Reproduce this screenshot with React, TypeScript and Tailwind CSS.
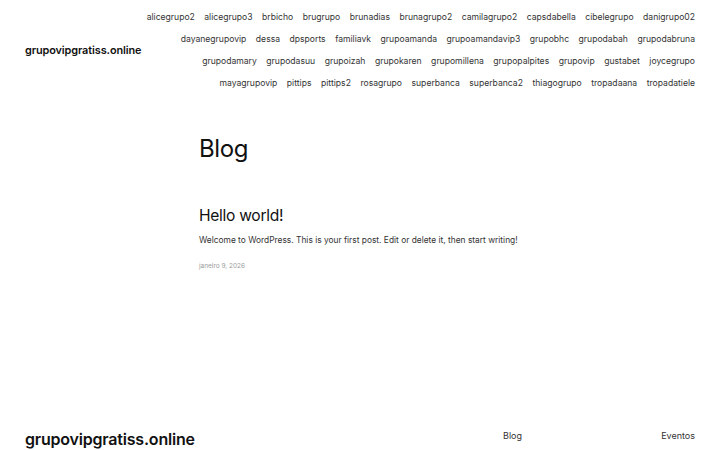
import React from 'react';

const rows: string[][] = [
    ['alicegrupo2', 'alicegrupo3', 'brbicho', 'brugrupo', 'brunadias', 'brunagrupo2', 'camilagrupo2', 'capsdabella', 'cibelegrupo', 'danigrupo02'],
    ['dayanegrupovip', 'dessa', 'dpsports', 'familiavk', 'grupoamanda', 'grupoamandavip3', 'grupobhc', 'grupodabah', 'grupodabruna'],
    ['grupodamary', 'grupodasuu', 'grupoizah', 'grupokaren', 'grupomillena', 'grupopalpites', 'grupovip', 'gustabet', 'joycegrupo'],
    ['mayagrupovip', 'pittips', 'pittips2', 'rosagrupo', 'superbanca', 'superbanca2', 'thiagogrupo', 'tropadaana', 'tropadatiele'],
];

export default function App() {
    return (
        <div className="min-h-[450px] bg-white text-[#111] flex flex-col" style={{ fontFamily: 'Inter, "Noto Sans", sans-serif' }}>
            <header className="flex items-center justify-between pl-[25px] pr-[25px] pt-[3px]">
                <a href="#" className="text-[10.9px] font-semibold tracking-[-0.1px] mt-[6px]">
                    grupovipgratiss.online
                </a>
                <nav className="flex flex-col items-end">
                    {rows.map((row, i) => (
                        <ul key={i} className="flex gap-x-[9.5px] h-[22px] items-center">
                            {row.map((item) => (
                                <li key={item}>
                                    <a href="#" className="text-[8.6px] text-[#333]">
                                        {item}
                                    </a>
                                </li>
                            ))}
                        </ul>
                    ))}
                </nav>
            </header>

            <main className="w-[322px] mx-auto pt-[46px]">
                <h1 className="text-[24px] leading-none tracking-[-0.4px]">Blog</h1>
                <article className="mt-[47px]">
                    <h2 className="text-[15.6px] leading-none tracking-[-0.3px]">
                        <a href="#">Hello world!</a>
                    </h2>
                    <p className="mt-[10px] text-[8.4px] text-[#333] whitespace-nowrap">
                        Welcome to WordPress. This is your first post. Edit or delete it, then start writing!
                    </p>
                    <p className="mt-[16px] text-[6.5px] text-[#999]">janeiro 9, 2026</p>
                </article>
            </main>

            <footer className="mt-auto flex items-center justify-between pl-[25px] pr-[25px] pb-[3px]">
                <a href="#" className="text-[16px] leading-[16px] font-semibold tracking-[-0.2px]">
                    grupovipgratiss.online
                </a>
                <nav className="flex w-[192px] justify-between text-[9px] text-[#333] -mt-[6px]">
                    <a href="#">Blog</a>
                    <a href="#">Eventos</a>
                </nav>
            </footer>
        </div>
    );
}
